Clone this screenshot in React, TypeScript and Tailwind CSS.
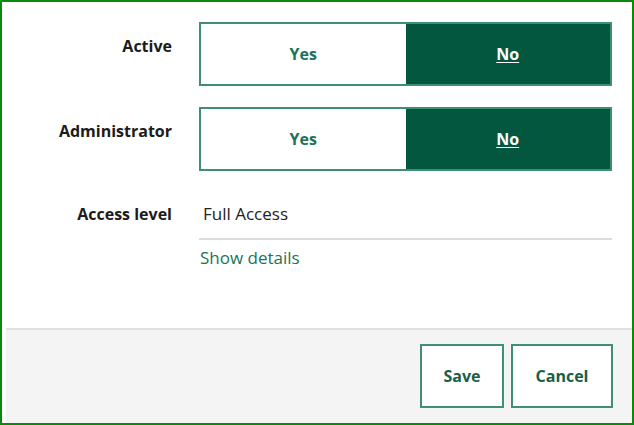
import React from "react";

const font = { fontFamily: '"Open Sans", "Noto Sans", sans-serif' };

function Toggle({ value }: { value: "yes" | "no" }) {
  return (
    <div className="flex h-[64px] w-[413px] border-2 border-[#3f8f74]">
      <button
        className={
          value === "yes"
            ? "flex-1 bg-[#02573e] text-[16px] font-bold text-white underline"
            : "flex-1 bg-white text-[16px] font-bold text-[#1d7258]"
        }
      >
        Yes
      </button>
      <button
        className={
          value === "no"
            ? "flex-1 bg-[#02573e] text-[16px] font-bold text-white underline underline-offset-2"
            : "flex-1 bg-white text-[16px] font-bold text-[#1d7258]"
        }
      >
        No
      </button>
    </div>
  );
}

export default function App() {
  return (
    <div style={font} className="flex h-[425px] w-[634px] flex-col border-2 border-[#0a8a0a] bg-white">
      {/* form rows */}
      <div className="flex flex-1 flex-col pt-[20px]">
        <div className="flex gap-[27px]">
          <div className="w-[170px] pt-[12px] text-right text-[16px] leading-[24px] font-bold text-[#1b1b1b]">Active</div>
          <Toggle value="no" />
        </div>

        <div className="mt-[21px] flex gap-[27px]">
          <div className="w-[170px] pt-[12px] text-right text-[16px] leading-[24px] font-bold text-[#1b1b1b]">Administrator</div>
          <Toggle value="no" />
        </div>

        <div className="mt-[31px] flex gap-[27px]">
          <div className="w-[170px] text-right text-[16px] font-bold leading-[24px] text-[#1b1b1b]">Access level</div>
          <div className="w-[413px]">
            <div className="border-b-2 border-[#dcdcdc] pb-[12px] pl-[4px] text-[17px] leading-[24px] text-[#222]">
              Full Access
            </div>
            <a className="mt-[6px] block pl-[1px] text-[17px] leading-[24px] text-[#1d7258]">Show details</a>
          </div>
        </div>
      </div>

      {/* footer */}
      <div className="ml-[4px] flex h-[95px] justify-end gap-[7px] border-t-2 border-[#e2e2e2] bg-[#f4f4f4] pr-[19px] pt-[14px]">
        <button className="h-[64px] w-[84px] border-2 border-[#3f8f74] bg-white text-[16px] font-bold text-[#1a5e47]">
          Save
        </button>
        <button className="h-[64px] w-[102px] border-2 border-[#3f8f74] bg-white text-[16px] font-bold text-[#1a5e47]">
          Cancel
        </button>
      </div>
    </div>
  );
}
